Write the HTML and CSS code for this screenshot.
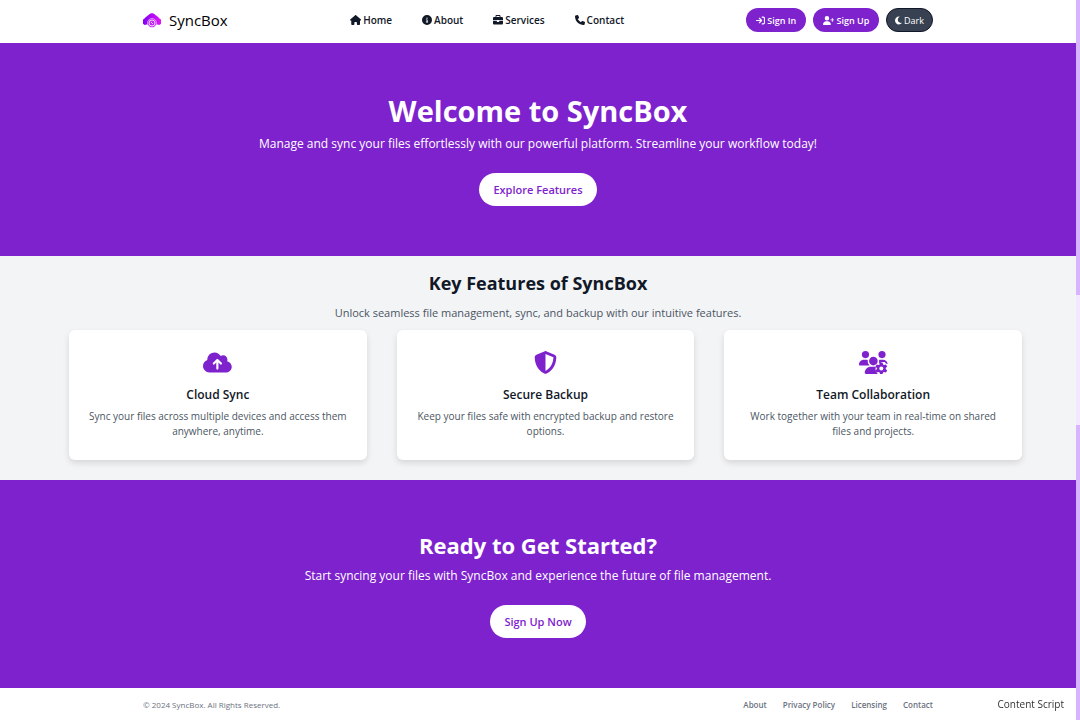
FILE: index.html
```html
<!DOCTYPE html>
<html lang="en">
<head>
  <meta charset="UTF-8">
  <meta name="viewport" content="width=device-width, initial-scale=1.0">
  <title>SyncBox</title>
  <link rel="stylesheet" href="styles.css">
</head>
<body>
  <header class="header">
    <div class="container">
      <a href="#" class="logo">
        <svg class="logo-icon" viewBox="0 0 36 30" aria-hidden="true">
          <defs>
            <linearGradient id="logoGradient" x1="0" y1="0" x2="1" y2="0">
              <stop offset="0" stop-color="#7a00f5"/>
              <stop offset="1" stop-color="#e616f5"/>
            </linearGradient>
          </defs>
          <path d="M7 23a6 6 0 0 1-5-11C5 8 8 6 11 4c4-5 10-5 14 0 3 2 6 4 9 8a6 6 0 0 1-5 11z" fill="url(#logoGradient)"/>
          <circle cx="18" cy="20" r="9" fill="#c026f5" stroke="#fff" stroke-width="1"/>
          <circle cx="18" cy="20" r="6" fill="none" stroke="#f3d5ff" stroke-width="2"/>
          <path d="M16 18l4 4" fill="none" stroke="#f3d5ff" stroke-width="2"/>
        </svg>
        <span>SyncBox</span>
      </a>

      <nav class="nav">
        <a href="#"><svg class="icon wide" viewBox="0 0 576 512" aria-hidden="true"><path d="M575.8 255.5c0 18-15 32.1-32 32.1h-32l.7 160.2c0 2.7-.2 5.4-.5 8.1V472c0 22.1-17.9 40-40 40H392c-22.1 0-40-17.9-40-40V384c0-17.7-14.3-32-32-32H256c-17.7 0-32 14.3-32 32v88c0 22.1-17.9 40-40 40H104c-22.1 0-40-17.9-40-40V287.600H32c-18 0-32-14-32-32.100c0-9 3-17 10-24L266.400 8c7-7 15-8 22-8s15 2 21 7L564.800 231.500c8 7 12 15 11 24z"/></svg>Home</a>
        <a href="#"><svg class="icon" viewBox="0 0 512 512" aria-hidden="true"><path d="M256 512A256 256 0 1 0 256 0a256 256 0 1 0 0 512zM216 336h24V272H216c-13.300 0-24-10.700-24-24s10.700-24 24-24h48c13.300 0 24 10.700 24 24v88h8c13.300 0 24 10.700 24 24s-10.700 24-24 24H216c-13.300 0-24-10.700-24-24s10.700-24 24-24zm40-208a32 32 0 1 1 0 64 32 32 0 1 1 0-64z"/></svg>About</a>
        <a href="#"><svg class="icon" viewBox="0 0 512 512" aria-hidden="true"><path d="M184 48H328c4.400 0 8 3.600 8 8V96H176V56c0-4.400 3.600-8 8-8zm-56 8V96H64C28.700 96 0 124.700 0 160v96H512V160c0-35.300-28.700-64-64-64H384V56c0-30.900-25.100-56-56-56H184c-30.900 0-56 25.100-56 56zM512 288H320v32c0 17.700-14.300 32-32 32H224c-17.700 0-32-14.300-32-32V288H0V416c0 35.300 28.700 64 64 64H448c35.300 0 64-28.700 64-64V288z"/></svg>Services</a>
        <a href="#"><svg class="icon" viewBox="0 0 512 512" aria-hidden="true"><path d="M164.900 24.600c-7.700-18.600-28-28.500-47.400-23.200l-88 24C12.100 30.200 0 46 0 64C0 311.400 200.600 512 448 512c18 0 33.800-12.100 38.600-29.500l24-88c5.300-19.400-4.600-39.700-23.200-47.400l-96-40c-16.300-6.800-35.200-2.100-46.300 11.600L304.700 368C234.300 334.700 177.300 277.700 144 207.300L193.300 167c13.700-11.200 18.400-30 11.600-46.300l-40-96z"/></svg>Contact</a>
      </nav>

      <div class="actions">
        <button type="button" class="btn"><svg class="icon" viewBox="0 0 512 512" aria-hidden="true"><path d="M352 96h64c17.700 0 32 14.300 32 32v256c0 17.700-14.300 32-32 32h-64c-17.700 0-32 14.300-32 32s14.300 32 32 32h64c53 0 96-43 96-96V128c0-53-43-96-96-96h-64c-17.700 0-32 14.300-32 32s14.300 32 32 32zm-9.400 182.600c12.500-12.500 12.500-32.800 0-45.300l-128-128c-12.500-12.500-32.800-12.500-45.300 0s-12.500 32.800 0 45.300L242.700 224H32c-17.700 0-32 14.300-32 32s14.300 32 32 32h210.700l-73.400 73.400c-12.500 12.500-12.500 32.800 0 45.300s32.800 12.500 45.300 0l128-128z"/></svg>Sign In</button>
        <button type="button" class="btn"><svg class="icon wide" viewBox="0 0 640 512" aria-hidden="true"><path d="M96 128a128 128 0 1 1 256 0A128 128 0 1 1 96 128zM0 482.300C0 383.800 79.800 304 178.300 304h91.400C368.200 304 448 383.800 448 482.300c0 16.400-13.300 29.700-29.700 29.700H29.700C13.300 512 0 498.700 0 482.300zM504 312V248H440c-13.300 0-24-10.700-24-24s10.700-24 24-24h64V136c0-13.300 10.700-24 24-24s24 10.700 24 24v64h64c13.300 0 24 10.700 24 24s-10.700 24-24 24H552v64c0 13.300-10.700 24-24 24s-24-10.700-24-24z"/></svg>Sign Up</button>
        <button type="button" class="btn btn-dark"><svg class="icon" viewBox="0 0 384 512" aria-hidden="true"><path d="M223.500 32C100 32 0 132.300 0 256S100 480 223.500 480c60.600 0 115.500-24.200 155.800-63.400c5-4.900 6.300-12.500 3.100-18.700s-10.100-9.700-17-8.500c-9.800 1.700-19.800 2.600-30.100 2.600c-96.900 0-175.500-78.800-175.500-176c0-65.800 36-123.100 89.300-153.300c6.100-3.500 9.200-10.500 7.700-17.300s-7.300-11.900-14.300-12.500c-6.300-.5-12.600-.8-19-.8z"/></svg>Dark</button>
      </div>
    </div>
  </header>

  <main>
    <section class="banner">
      <h1>Welcome to SyncBox</h1>
      <p>Manage and sync your files effortlessly with our powerful platform. Streamline your workflow today!</p>
      <a href="#features" class="banner-btn">Explore Features</a>
    </section>

    <section class="features" id="features">
      <h2>Key Features of SyncBox</h2>
      <p class="subtitle">Unlock seamless file management, sync, and backup with our intuitive features.</p>
      <div class="cards">
        <div class="card">
          <svg class="card-icon" viewBox="0 0 640 512" aria-hidden="true"><path d="M144 480C64.500 480 0 415.500 0 336c0-62.800 40.200-116.200 96.200-135.900c-.1-2.700-.2-5.400-.2-8.100c0-88.400 71.600-160 160-160c59.300 0 111 32.200 138.700 80.200C409.900 102 428.300 96 448 96c53 0 96 43 96 96c0 12.200-2.300 23.800-6.400 34.600C596 238.400 640 290.100 640 352c0 70.700-57.300 128-128 128H144zm79-217c-9.400 9.400-9.400 24.600 0 33.900s24.600 9.400 33.900 0l39-39V392c0 13.300 10.700 24 24 24s24-10.700 24-24V257.900l39 39c9.400 9.400 24.600 9.400 33.900 0s9.400-24.600 0-33.900l-80-80c-9.400-9.400-24.600-9.400-33.900 0l-80 80z"/></svg>
          <h3>Cloud Sync</h3>
          <p>Sync your files across multiple devices and access them anywhere, anytime.</p>
        </div>
        <div class="card">
          <svg class="card-icon" viewBox="0 0 512 512" aria-hidden="true"><path d="M256 0c4.600 0 9.200 1 13.400 2.900L457.700 82.800c22 9.300 38.400 31 38.300 57.200c-.5 99.200-41.300 280.700-213.600 363.200c-16.700 8-36.100 8-52.800 0C57.300 420.700 16.500 239.200 16 140c-.1-26.200 16.300-47.900 38.300-57.200L242.700 2.900C246.800 1 251.400 0 256 0zm0 66.800V444.800C394 378 431.100 230.100 432 141.400L256 66.800z"/></svg>
          <h3>Secure Backup</h3>
          <p>Keep your files safe with encrypted backup and restore options.</p>
        </div>
        <div class="card">
          <svg class="card-icon" viewBox="0 0 640 512" aria-hidden="true">
            <circle cx="144" cy="80" r="80"/>
            <circle cx="512" cy="80" r="80"/>
            <circle cx="320" cy="224" r="96"/>
            <path d="M0 298.700C0 239.800 47.800 192 106.700 192h42.700c15.900 0 31 3.500 44.600 9.700A128 128 0 0 0 235.200 320H21.300C9.600 320 0 310.400 0 298.700z"/>
            <path d="M128 485.300C128 411.700 187.700 352 261.300 352h116.700c-22 50-8 105 38 160H154.700c-14.700 0-26.700-12-26.700-26.700z"/>
            <path d="M446 202c14-7 30-10 45-10h42c55 0 100 42 106 96l-42-8-22-34h-80l-26 36-21-4c2-28-1-54-2-76z"/>
            <path fill-rule="evenodd" d="M470 258h54l12 42 20 12 44-12 27 46-32 32v24l32 32-27 46-44-12-20 12-12 34h-54l-12-34-20-12-44 12-27-46 32-32v-24l-32-32 27-46 44 12 20-12zM497 344a46 46 0 1 0 0 92 46 46 0 1 0 0-92z"/>
          </svg>
          <h3>Team Collaboration</h3>
          <p>Work together with your team in real-time on shared files and projects.</p>
        </div>
      </div>
    </section>

    <section class="banner">
      <h2>Ready to Get Started?</h2>
      <p>Start syncing your files with SyncBox and experience the future of file management.</p>
      <a href="#" class="banner-btn">Sign Up Now</a>
    </section>
  </main>

  <footer class="footer">
    <div class="container">
      <span>© 2024 SyncBox. All Rights Reserved.</span>
      <nav class="footer-links">
        <a href="#">About</a>
        <a href="#">Privacy Policy</a>
        <a href="#">Licensing</a>
        <a href="#">Contact</a>
      </nav>
    </div>
  </footer>

  <div class="script-label">Content Script</div>
  <div class="scroll-track">
    <div class="scroll-thumb"></div>
    <div class="scroll-thumb"></div>
  </div>
</body>
</html>
```
FILE: styles.css
```css
* {
  box-sizing: border-box;
  margin: 0;
  padding: 0;
}

body {
  font-family: "Segoe UI", "Open Sans", sans-serif;
  color: #111827;
  background: #fff;
  padding-right: 4px;
}

a {
  color: inherit;
  text-decoration: none;
}

.container {
  display: flex;
  align-items: center;
  justify-content: space-between;
  max-width: 790px;
  margin: 0 auto;
}

/* header */
.header {
  padding: 8px 0 11px;
}

.logo {
  display: flex;
  align-items: center;
  gap: 8px;
  font-size: 15px;
  line-height: 24px;
  font-weight: 500;
  color: #000;
}

.logo-icon {
  width: 18px;
  height: 15px;
}

.nav {
  display: flex;
  gap: 30px;
  font-size: 10px;
  line-height: 16px;
  font-weight: 600;
}

.nav a {
  display: flex;
  align-items: center;
  gap: 2px;
}

.icon {
  height: 10px;
  fill: currentColor;
}

.actions {
  display: flex;
  gap: 7px;
}

.btn {
  display: flex;
  align-items: center;
  gap: 2px;
  height: 24px;
  padding: 0 10px;
  border: none;
  border-radius: 12px;
  background: #7e22ce;
  color: #fff;
  font-family: inherit;
  font-size: 9px;
  font-weight: 600;
  cursor: pointer;
}

.btn .icon {
  height: 9px;
}

.btn-dark {
  padding: 0 8px;
  background: #374151;
  border: 1px solid #111827;
  font-weight: 400;
}

/* purple banners */
.banner {
  display: flex;
  flex-direction: column;
  align-items: center;
  padding: 48px 16px 50px;
  background: #7e22ce;
  color: #fff;
  text-align: center;
}

.banner h1 {
  font-size: 29px;
  line-height: 40px;
  font-weight: 700;
}

.banner h2 {
  font-size: 22px;
  line-height: 35px;
  font-weight: 700;
}

.banner p {
  font-size: 12px;
  line-height: 26px;
  margin-bottom: 16px;
}

.banner-btn {
  padding: 0 14px;
  border-radius: 17px;
  background: #fff;
  color: #7e22ce;
  font-size: 11px;
  line-height: 33px;
  font-weight: 600;
}

/* features */
.features {
  padding: 15px 54px 20px 69px;
  background: #f3f4f6;
  text-align: center;
}

.features h2,
.subtitle {
  margin-right: 15px;
}

.features h2 {
  font-size: 18px;
  line-height: 24px;
  font-weight: 700;
}

.subtitle {
  padding: 9px 0 8px;
  font-size: 11px;
  line-height: 18px;
  color: #4b5563;
}

.cards {
  display: grid;
  grid-template-columns: repeat(3, 1fr);
  gap: 30px;
}

.card {
  padding: 18px 18px 21px;
  border-radius: 6px;
  background: #fff;
  box-shadow: 0 3px 6px rgba(0, 0, 0, 0.12);
}

.card-icon {
  display: block;
  height: 23px;
  margin: 3px auto 10px;
  fill: #7e22ce;
}

.card h3 {
  margin-bottom: 3px;
  font-size: 12px;
  line-height: 22px;
  font-weight: 600;
}

.card p {
  font-size: 10px;
  line-height: 15px;
  color: #4b5563;
}

/* footer */
.footer {
  padding: 9px 0 7px;
  font-size: 8px;
  line-height: 16px;
  color: #6b7280;
}

.footer-links {
  display: flex;
  gap: 16px;
  font-weight: 600;
}

.script-label {
  position: fixed;
  right: 16px;
  bottom: 8px;
  font-size: 10px;
  line-height: 16px;
  color: #333;
}

/* page scroll indicator */
.scroll-track {
  position: fixed;
  top: 0;
  right: 0;
  bottom: 0;
  width: 4px;
  display: flex;
  flex-direction: column;
  justify-content: space-between;
  background: #f3e8ff;
}

.scroll-thumb {
  height: 41%;
  background: #d8b4fe;
}
```
